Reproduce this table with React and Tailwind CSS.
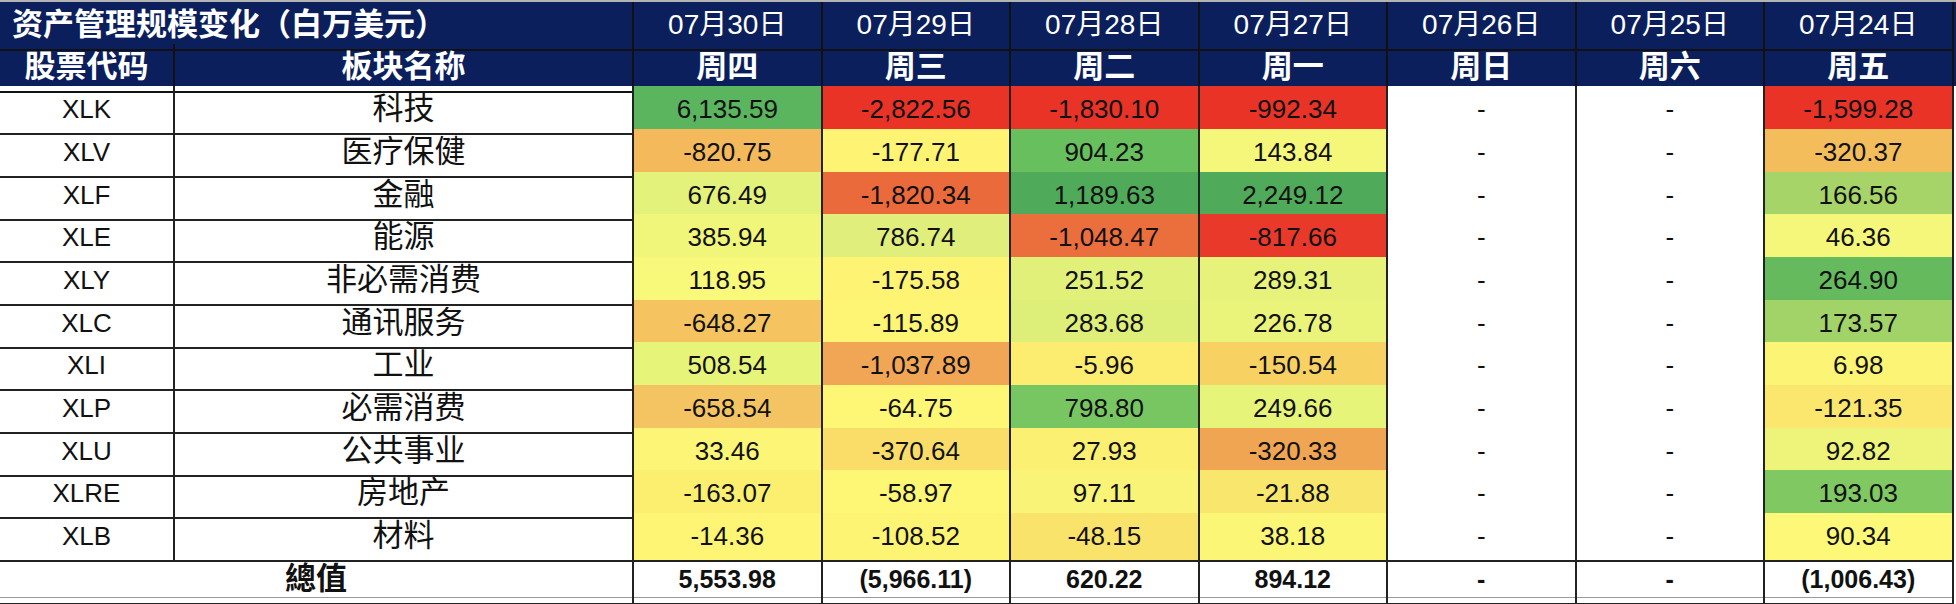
import React from "react";

const dates = ["07月30日", "07月29日", "07月28日", "07月27日", "07月26日", "07月25日", "07月24日"];
const weekdays = ["周四", "周三", "周二", "周一", "周日", "周六", "周五"];

// ticker, sector, row height, cells [value, bg]
const rows = [
  ["XLK", "科技", "h-[43px]", [
    ["6,135.59", "bg-[#5ab55e]"], ["-2,822.56", "bg-[#e83326]"], ["-1,830.10", "bg-[#e83326]"], ["-992.34", "bg-[#e83326]"],
    ["-", "bg-white"], ["-", "bg-white"], ["-1,599.28", "bg-[#e83326]"],
  ]],
  ["XLV", "医疗保健", "h-[43px]", [
    ["-820.75", "bg-[#f4b95a]"], ["-177.71", "bg-[#fef373]"], ["904.23", "bg-[#68bf5e]"], ["143.84", "bg-[#f5f77a]"],
    ["-", "bg-white"], ["-", "bg-white"], ["-320.37", "bg-[#f4bd5c]"],
  ]],
  ["XLF", "金融", "h-[42px]", [
    ["676.49", "bg-[#e3f27a]"], ["-1,820.34", "bg-[#ea6a3c]"], ["1,189.63", "bg-[#4fab5a]"], ["2,249.12", "bg-[#4fab5a]"],
    ["-", "bg-white"], ["-", "bg-white"], ["166.56", "bg-[#a6d468]"],
  ]],
  ["XLE", "能源", "h-[43px]", [
    ["385.94", "bg-[#f0f67a]"], ["786.74", "bg-[#e0ee7c]"], ["-1,048.47", "bg-[#eb6e3d]"], ["-817.66", "bg-[#e8392a]"],
    ["-", "bg-white"], ["-", "bg-white"], ["46.36", "bg-[#f4f77a]"],
  ]],
  ["XLY", "非必需消费", "h-[43px]", [
    ["118.95", "bg-[#f8f87a]"], ["-175.58", "bg-[#fef373]"], ["251.52", "bg-[#e1f079]"], ["289.31", "bg-[#e6f27a]"],
    ["-", "bg-white"], ["-", "bg-white"], ["264.90", "bg-[#66ba5e]"],
  ]],
  ["XLC", "通讯服务", "h-[42px]", [
    ["-648.27", "bg-[#f5c360]"], ["-115.89", "bg-[#fef575]"], ["283.68", "bg-[#ddef78]"], ["226.78", "bg-[#ebf47a]"],
    ["-", "bg-white"], ["-", "bg-white"], ["173.57", "bg-[#a2d368]"],
  ]],
  ["XLI", "工业", "h-[43px]", [
    ["508.54", "bg-[#e6f47a]"], ["-1,037.89", "bg-[#f0a654]"], ["-5.96", "bg-[#fced70]"], ["-150.54", "bg-[#f8d163]"],
    ["-", "bg-white"], ["-", "bg-white"], ["6.98", "bg-[#fcf474]"],
  ]],
  ["XLP", "必需消费", "h-[43px]", [
    ["-658.54", "bg-[#f5c462]"], ["-64.75", "bg-[#fef675]"], ["798.80", "bg-[#77c661]"], ["249.66", "bg-[#e6f47a]"],
    ["-", "bg-white"], ["-", "bg-white"], ["-121.35", "bg-[#fbe76d]"],
  ]],
  ["XLU", "公共事业", "h-[42px]", [
    ["33.46", "bg-[#fcf576]"], ["-370.64", "bg-[#fadc69]"], ["27.93", "bg-[#fcf073]"], ["-320.33", "bg-[#f0a552]"],
    ["-", "bg-white"], ["-", "bg-white"], ["92.82", "bg-[#eef47a]"],
  ]],
  ["XLRE", "房地产", "h-[43px]", [
    ["-163.07", "bg-[#fcef70]"], ["-58.97", "bg-[#fef675]"], ["97.11", "bg-[#f9f377]"], ["-21.88", "bg-[#f9e66c]"],
    ["-", "bg-white"], ["-", "bg-white"], ["193.03", "bg-[#7fc862]"],
  ]],
  ["XLB", "材料", "h-[43px]", [
    ["-14.36", "bg-[#fdf573]"], ["-108.52", "bg-[#fef474]"], ["-48.15", "bg-[#fae36b]"], ["38.18", "bg-[#fbf676]"],
    ["-", "bg-white"], ["-", "bg-white"], ["90.34", "bg-[#fdf878]"],
  ]],
];

const totals = ["5,553.98", "(5,966.11)", "620.22", "894.12", "-", "-", "(1,006.43)"];

const grid = "grid grid-cols-[175px_459px_repeat(7,188.5px)]";
const cell = "flex items-center justify-center border-r-2 border-b-2 border-[#222]";

const App = () => {
  return (
    <div className="h-[604px] w-[1956px] bg-white font-['Liberation_Sans','Noto_Sans_CJK_SC',sans-serif] text-[#111]">
      <div className="border-t-2 border-[#b4b4b4]">
        {/* title + dates */}
        <div className={`${grid} h-[42px] bg-[#0a1f5c] text-white`}>
          <div className="col-span-2 flex items-center border-r-2 border-b-2 border-[#111] pl-3 text-[31px] font-bold">
            资产管理规模变化（白万美元）
          </div>
          {dates.map((d) => (
            <div key={d} className="flex items-center justify-center border-r-2 border-b-2 border-[#111] text-[28px]">
              {d}
            </div>
          ))}
        </div>

        {/* column headers */}
        <div className={`${grid} h-[42px] bg-[#0a1f5c] text-white`}>
          <div className="flex items-center justify-center border-r-2 border-b-2 border-[#111] text-[31px] font-bold">
            股票代码
          </div>
          <div className="flex items-center justify-center border-r-2 border-b-2 border-[#111] text-[31px] font-bold">
            板块名称
          </div>
          {weekdays.map((w) => (
            <div key={w} className="flex items-center justify-center border-r-2 border-b-2 border-[#111] text-[31px] font-bold">
              {w}
            </div>
          ))}
        </div>

        {rows.map(([ticker, name, h, cells]) => (
          <div key={ticker} className={`${grid} ${h}`}>
            <div className={`${cell} text-[26px]`}>{ticker}</div>
            <div className={`${cell} text-[31px]`}>{name}</div>
            {cells.map(([v, bg], i) => (
              <div key={i} className={`${cell} ${bg} text-[26px]`}>
                {v}
              </div>
            ))}
          </div>
        ))}

        {/* totals */}
        <div className={`${grid} h-[40px]`}>
          <div className={`${cell} col-span-2 text-[31px] font-bold`}>總值</div>
          {totals.map((t, i) => (
            <div key={i} className={`${cell} text-[25px] font-bold`}>
              {t}
            </div>
          ))}
        </div>
        <div className="mt-px h-px w-[1954px] bg-[#9a9a9a]" />
      </div>
    </div>
  );
};

export default App;
